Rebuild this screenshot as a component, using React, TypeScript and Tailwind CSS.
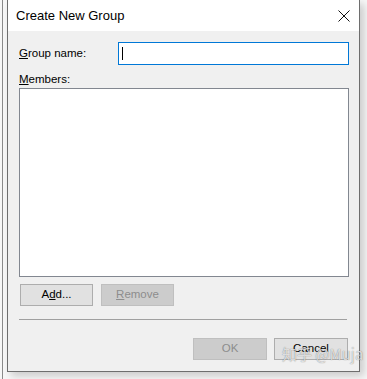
import React from "react";

export default function App() {
  const font = { fontFamily: '"Liberation Sans", Arial, sans-serif' };
  return (
    <div className="w-[367px] h-[379px] bg-[#f7f7f7] flex overflow-hidden relative" style={font}>
      <div className="w-[7px] h-full flex">
        <div className="w-[2px]" />
        <div className="w-px h-full bg-[#8a8a8a]" />
      </div>
      <div className="flex flex-col w-[353px] h-[372px] border-x border-b border-[#6e6e6e] bg-[#f0f0f0] shadow-[4px_4px_8px_rgba(0,0,0,0.18)]">
        <div className="h-[31px] bg-white flex items-center justify-between pl-[8px] pr-[9px]">
          <span className="text-[13px] text-black">Create New Group</span>
          <svg width="12" height="12" viewBox="0 0 12 12" className="mt-[1px]">
            <path d="M0.5 0.5 L11.5 11.5 M11.5 0.5 L0.5 11.5" stroke="#111" strokeWidth="1" fill="none" />
          </svg>
        </div>
        <div className="flex flex-col pl-[11px] pr-[10px] pt-[11px]">
          <div className="flex items-center h-[23px]">
            <span className="w-[99px] text-[11.5px] text-black">
              <span className="underline">G</span>roup name:
            </span>
            <div className="w-[232px] h-[23px] border border-[#0078d7] bg-white flex items-center pl-[3px]">
              <div className="w-px h-[13px] bg-black" />
            </div>
          </div>
          <div className="mt-[5px] h-[18px] text-[11.5px] text-black leading-[18px]">
            <span className="underline">M</span>embers:
          </div>
          <div className="w-[330px] h-[189px] border border-[#828790] bg-white" />
          <div className="flex gap-[8px] mt-[7px] pl-[1px]">
            <div className="w-[73px] h-[22px] border border-[#adadad] bg-[#e1e1e1] flex items-center justify-center text-[11.5px] text-black">
              A<span className="underline">d</span>d...
            </div>
            <div className="w-[73px] h-[22px] border border-[#bfbfbf] bg-[#cccccc] flex items-center justify-center text-[11.5px] text-[#8d8d8d]">
              <span className="underline">R</span>emove
            </div>
          </div>
          <div className="mt-[13px] w-[328px] h-px bg-[#a0a0a0]" />
          <div className="flex justify-end gap-[7px] mt-[18px] pr-[1px]">
            <div className="w-[74px] h-[22px] border border-[#bfbfbf] bg-[#cccccc] flex items-center justify-center text-[11.5px] text-[#8d8d8d]">
              OK
            </div>
            <div className="w-[74px] h-[22px] border border-[#adadad] bg-[#e1e1e1] flex items-center justify-center text-[11.5px] text-black">
              Cancel
            </div>
          </div>
        </div>
      </div>
      <div
        className="absolute left-[282px] top-[343px] text-[15px] text-[rgba(255,255,255,0.75)] [text-shadow:0_0_1px_rgba(0,0,0,0.55)]"
        style={{ fontFamily: '"Noto Sans CJK SC", "Liberation Sans", sans-serif' }}
      >
        知乎 @Muja
      </div>
    </div>
  );
}
